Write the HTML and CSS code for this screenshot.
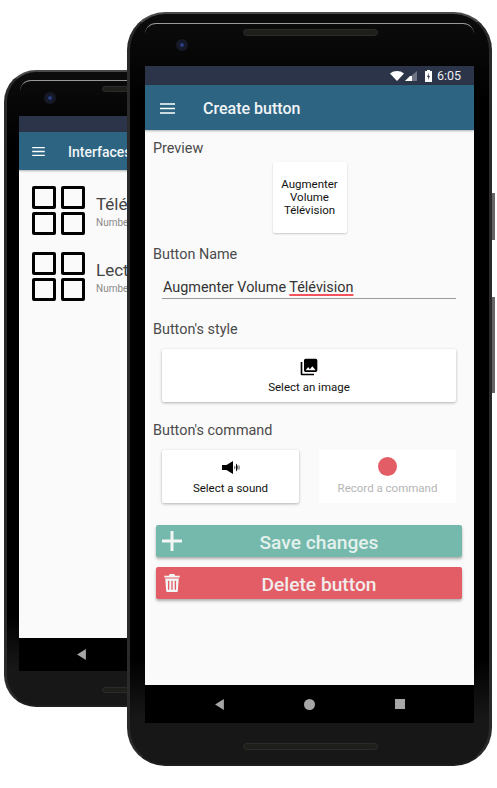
FILE: index.html
```html
<!DOCTYPE html>
<html lang="en">
<head>
    <meta charset="UTF-8">
    <meta name="viewport" content="width=device-width, initial-scale=1.0">
    <title>Create button</title>
    <link rel="stylesheet" href="styles.css">
</head>
<body>
    <!-- Back phone: interfaces list -->
    <div class="phone phone-back">
        <div class="glare"></div>
        <div class="camera"></div>
        <div class="speaker speaker-top"></div>
        <div class="speaker speaker-bottom"></div>
        <div class="screen">
            <div class="status-bar"></div>
            <header class="app-bar">
                <svg class="menu-icon" viewBox="0 0 14 10"><path d="M0 0h14v1.400H0zM0 4.300h14v1.400H0zM0 8.600h14V10H0z"/></svg>
                <span class="app-title">Interfaces</span>
            </header>
            <main class="list">
                <div class="list-row">
                    <div class="grid-icon"><i></i><i></i><i></i><i></i></div>
                    <div>
                        <div class="list-title">Télév</div>
                        <div class="list-sub">Number</div>
                    </div>
                </div>
                <div class="list-row">
                    <div class="grid-icon"><i></i><i></i><i></i><i></i></div>
                    <div>
                        <div class="list-title">Lecteur</div>
                        <div class="list-sub">Number</div>
                    </div>
                </div>
            </main>
            <nav class="nav-bar">
                <svg class="nav-icon" viewBox="0 0 8 10"><path d="M8 0v10L0 5z"/></svg>
            </nav>
        </div>
    </div>

    <!-- Front phone: button editor -->
    <div class="phone phone-front">
        <div class="side-key key-power"></div>
        <div class="side-key key-volume"></div>
        <div class="glare"></div>
        <div class="camera"></div>
        <div class="speaker speaker-top"></div>
        <div class="speaker speaker-bottom"></div>
        <div class="screen">
            <div class="status-bar">
                <svg class="wifi" viewBox="0 0 14 10"><path d="M0 2.500C4-.8 10-.8 14 2.500L7 10z"/></svg>
                <svg class="signal" viewBox="0 0 12 10"><path d="M12 0v10H0z" fill="#6f7583"/><path d="M7 5v5H0l5-5z"/></svg>
                <svg class="battery" viewBox="0 0 7 12"><path d="M2 0h3v1h2v11H0V1h2z"/><path d="M4 3L2 7h1.300L3 10l2-4H3.700z" fill="#2b3448"/></svg>
                <span class="clock">6:05</span>
            </div>
            <header class="app-bar">
                <svg class="menu-icon" viewBox="0 0 14 10"><path d="M0 0h14v1.400H0zM0 4.300h14v1.400H0zM0 8.600h14V10H0z"/></svg>
                <span class="app-title">Create button</span>
            </header>
            <main class="content">
                <div class="label">Preview</div>
                <div class="preview-card">Augmenter<br>Volume<br>Télévision</div>

                <div class="label label-name">Button Name</div>
                <div class="name-field">Augmenter Volume <span class="misspelled">Télévision</span></div>

                <div class="label label-style">Button's style</div>
                <div class="card card-wide">
                    <svg class="card-icon" viewBox="0 0 24 24"><path d="M22 16V4c0-1.100-.9-2-2-2H8c-1.100 0-2 .9-2 2v12c0 1.100.9 2 2 2h12c1.100 0 2-.9 2-2zm-11-4l2.030 2.710L16 11l4 5H8l3-4zM2 6v14c0 1.100.9 2 2 2h14v-2H4V6H2z"/></svg>
                    <span>Select an image</span>
                </div>

                <div class="label label-command">Button's command</div>
                <div class="card-row">
                    <div class="card">
                        <svg class="card-icon sound-icon" viewBox="0 0 19 13"><path d="M0 4h4.500L11 0v13L4.500 9H0z"/><path d="M12.500 4.500c1 .8 1 3.200 0 4z"/><path d="M14 2.500c2.200 1.500 2.200 6.500 0 8z"/><path d="M16.500 3.500c1.800 1.500 1.800 4.500 0 6z" opacity=".55"/></svg>
                        <span>Select a sound</span>
                    </div>
                    <div class="card card-disabled">
                        <div class="record-dot"></div>
                        <span>Record a command</span>
                    </div>
                </div>

                <div class="action action-save">
                    <svg class="action-icon" viewBox="0 0 20 20"><path d="M8.500 0h3v8.500H20v3h-8.500V20h-3v-8.500H0v-3h8.500z"/></svg>
                    Save changes
                </div>
                <div class="action action-delete">
                    <svg class="action-icon" viewBox="0 0 17 20"><path d="M6 0h5l1 2h5v2H0V2h5zM1 5h15l-1 14c0 .6-.5 1-1 1H3c-.5 0-1-.4-1-1zm3 2.500v10h1.500v-10zm3.750 0v10h1.500v-10zm3.750 0v10H13v-10z"/></svg>
                    Delete button
                </div>
            </main>
            <nav class="nav-bar">
                <svg class="nav-icon" viewBox="0 0 8 10"><path d="M8 0v10L0 5z"/></svg>
                <div class="nav-circle"></div>
                <div class="nav-square"></div>
            </nav>
        </div>
    </div>
</body>
</html>
```

FILE: styles.css
```css
html, body {
    margin: 0;
    height: 100%;
    background: #fff;
    overflow: hidden;
}

body {
    font-family: Roboto, "Liberation Sans", sans-serif;
    color: #444;
}

/* Phone bodies sit on a free canvas */
.phone {
    position: absolute;
    box-sizing: border-box;
    display: flex;
    background: linear-gradient(to bottom, #0c0c0c 0, #000 12%, #000 86%, #171717 94%);
    border: 3px solid #2a2a2a;
    border-top: 2px solid #4a4a4a;
    border-bottom: 2px solid #1e1e1e;
}

.phone-back {
    left: 4px;
    top: 70px;
    width: 300px;
    height: 637px;
    padding: 44px 12px 34px;
    border-radius: 32px;
}

.phone-front {
    left: 127px;
    top: 12px;
    width: 365px;
    height: 754px;
    padding: 52px 15px 41px;
    border-radius: 38px;
}

/* Thin highlight along the top of the glass */
.glare {
    position: absolute;
    left: 15px;
    right: 15px;
    top: 9px;
    height: 10px;
    border-top: 1px solid #9a9a9a;
    border-radius: 22px 22px 0 0;
}

.phone-back .glare {
    left: 13px;
    right: 13px;
    top: 8px;
}

.camera {
    position: absolute;
    width: 12px;
    height: 12px;
    border-radius: 50%;
    background: radial-gradient(circle, #3a55b0 0, #141a30 30%, #16181f 70%);
}

.phone-back .camera {
    left: 37px;
    top: 20px;
}

.phone-front .camera {
    left: 46px;
    top: 25px;
}

.speaker {
    position: absolute;
    background: #1e1e1a;
    border: 1px solid #2b2b2b;
    border-radius: 4px;
}

.phone-back .speaker {
    left: 95px;
    width: 120px;
    height: 4px;
}

.phone-back .speaker-top {
    top: 14px;
}

.phone-back .speaker-bottom {
    bottom: 12px;
}

.phone-front .speaker {
    left: 113px;
    width: 133px;
    height: 5px;
}

.phone-front .speaker-top {
    top: 15px;
}

.phone-front .speaker-bottom {
    bottom: 14px;
}

.side-key {
    position: absolute;
    left: 362px;
    width: 3px;
    background: #6a6666;
}

.key-power {
    top: 179px;
    height: 47px;
}

.key-volume {
    top: 283px;
    height: 96px;
}

.screen {
    flex: 1;
    display: flex;
    flex-direction: column;
    position: relative;
    min-width: 0;
}

.status-bar {
    flex: none;
    height: 19px;
    background: #2b3448;
    display: flex;
    align-items: center;
    justify-content: flex-end;
    padding-right: 13px;
}

.phone-back .status-bar {
    height: 16px;
}

.status-bar svg {
    fill: #fff;
}

.wifi {
    width: 14px;
    height: 10px;
}

.signal {
    width: 12px;
    height: 10px;
    margin-left: 1px;
}

.battery {
    width: 7px;
    height: 12px;
    margin-left: 8px;
}

.clock {
    margin-left: 5px;
    font-size: 12.500px;
    color: #eceef1;
}

.app-bar {
    flex: none;
    box-sizing: border-box;
    height: 45px;
    padding: 1px 0 0 15px;
    background: #2d6482;
    box-shadow: 0 1px 2px rgba(0, 0, 0, 0.3);
    display: flex;
    align-items: center;
    position: relative;
    color: #f1f5f7;
}

.phone-back .app-bar {
    height: 38px;
    padding-left: 13px;
}

.menu-icon {
    width: 15px;
    height: 11px;
    fill: #fff;
}

.phone-back .menu-icon {
    width: 13px;
    height: 9px;
}

.app-title {
    margin-left: 28px;
    font-size: 16px;
    font-weight: 500;
}

.phone-back .app-title {
    margin-left: 23px;
    font-size: 14px;
}

/* Back phone list */
.list {
    flex: 1;
    background: #fafafa;
    padding: 16px 13px 0;
}

.list-row {
    display: flex;
    align-items: center;
    gap: 11px;
    margin-bottom: 17px;
}

.grid-icon {
    display: grid;
    grid-template-columns: 24px 24px;
    grid-auto-rows: 23px;
    gap: 3px 5px;
}

.grid-icon i {
    box-sizing: border-box;
    border: 3px solid #000;
    border-radius: 2px;
}

.list-title {
    font-size: 17px;
    color: #444;
    white-space: nowrap;
    padding-top: 1px;
}

.list-sub {
    font-size: 10px;
    margin-top: 3px;
    color: #8a8a8a;
    white-space: nowrap;
}

/* Front phone form */
.content {
    flex: 1;
    background: #fafafa;
    padding-top: 9px;
    display: flex;
    flex-direction: column;
}

.label {
    font-size: 14.400px;
    line-height: 18px;
    padding-top: 1px;
    margin-left: 8px;
    color: #4a4a4a;
}

.label-name {
    margin-top: 12px;
}

.label-style {
    margin-top: 21px;
}

.label-command {
    margin-top: 19px;
}

.preview-card {
    box-sizing: border-box;
    align-self: center;
    width: 74px;
    height: 71px;
    margin-top: 4px;
    display: flex;
    align-items: center;
    justify-content: center;
    text-align: center;
    font-size: 11.500px;
    line-height: 13px;
    color: #111;
    background: #fff;
    border-radius: 2px;
    box-shadow: 0 1px 2px rgba(0, 0, 0, 0.2);
}

.name-field {
    box-sizing: border-box;
    height: 24px;
    margin: 11px 18px 0 17px;
    padding: 2px 0 0 1px;
    font-size: 14.400px;
    line-height: 22px;
    color: #333;
    border-bottom: 1px solid #9a9a9a;
}

.misspelled {
    text-decoration: underline;
    text-decoration-color: #f4525c;
    text-decoration-thickness: 1.500px;
    text-underline-offset: 2px;
}

.card {
    box-sizing: border-box;
    flex: 1;
    height: 53px;
    display: flex;
    flex-direction: column;
    align-items: center;
    justify-content: space-between;
    padding: 8px 0;
    font-size: 11.500px;
    color: #111;
    background: #fff;
    border-radius: 2px;
    box-shadow: 0 1px 3px rgba(0, 0, 0, 0.3);
}

.card-wide {
    flex: none;
    margin: 10px 18px 0 17px;
}

.card-row {
    display: flex;
    gap: 20px;
    margin: 10px 18px 0 17px;
}

.card-icon {
    width: 20px;
    height: 20px;
    fill: #000;
}

.sound-icon {
    width: 19px;
    height: 13px;
    margin: 3px 0 0 2px;
}

.card-disabled {
    color: #b5b5b5;
    box-shadow: none;
    padding-top: 7px;
}

.record-dot {
    width: 19px;
    height: 19px;
    border-radius: 50%;
    background: #e35d66;
}

.action {
    position: relative;
    box-sizing: border-box;
    height: 32px;
    margin: 0 12px 0 11px;
    padding: 2px 0 0 20px;
    display: flex;
    align-items: center;
    justify-content: center;
    font-size: 19.200px;
    font-weight: 500;
    border-radius: 2px;
    box-shadow: 0 2px 3px rgba(0, 0, 0, 0.3);
}

.action-save {
    margin-top: 22px;
    background: #74b9ab;
    color: #e4f1ee;
}

.action-delete {
    margin-top: 10px;
    background: #e35d66;
    color: #f1ecec;
}

/* Icon floats over the left end of the button */
.action-icon {
    position: absolute;
    left: 6px;
    top: 6px;
    width: 20px;
    height: 20px;
    fill: #f2f7f6;
}

.action-delete .action-icon {
    left: 8px;
    top: 7px;
    width: 16px;
    height: 18px;
}

.nav-bar {
    flex: none;
    height: 38px;
    background: #000;
    display: flex;
    align-items: center;
    justify-content: center;
    gap: 80px;
}

.phone-back .nav-bar {
    height: 33px;
    justify-content: flex-start;
    padding-left: 58px;
}

.nav-icon {
    width: 9px;
    height: 11px;
    fill: #a6a6a6;
}

.nav-circle {
    width: 11px;
    height: 11px;
    border-radius: 50%;
    background: #a6a6a6;
}

.nav-square {
    width: 10px;
    height: 10px;
    background: #a6a6a6;
}
```
